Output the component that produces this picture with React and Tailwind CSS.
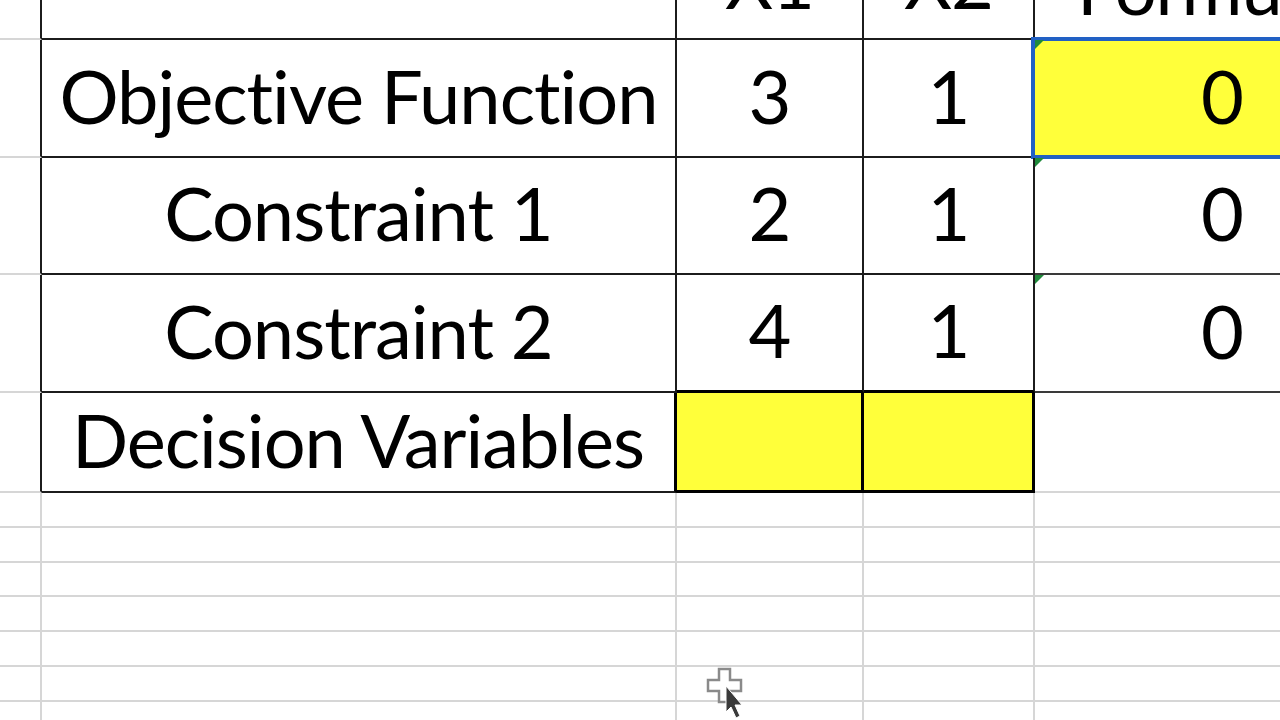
import React from "react";

const FONT = { fontFamily: "Lato, 'Open Sans', sans-serif", fontVariantLigatures: "none" };

function Tri() {
  return (
    <svg className="absolute left-0 top-0" width="9" height="9" viewBox="0 0 9 9">
      <polygon points="0,0 9,0 0,9" fill="#1f8a3b" />
    </svg>
  );
}

function Cell({ cls = "", children }) {
  return <div className={"relative flex " + cls}>{children}</div>;
}

export default function App() {
  const txt = "text-[74px] leading-none tracking-[-1px] text-black";
  const lightRows = [0, 1, 2, 3, 4, 5, 6];
  return (
    <div className="w-[1280px] h-[720px] overflow-hidden bg-white relative" style={FONT}>
      <div className="grid grid-cols-[42px_635px_187px_171px_1fr] grid-rows-[40px_118px_117px_118px_100px_35px_35px_34px_35px_35px_35px_35px]">
        {/* header row */}
        <Cell cls="border-r-2 border-b-2 border-r-[#1c1c1c] border-b-[#d6d6d6]" />
        <Cell cls="border-r-2 border-b-2 border-[#1c1c1c]" />
        <Cell cls="border-r-2 border-b-2 border-[#1c1c1c] overflow-hidden items-end justify-center pb-[20px]">
          <span className={txt}>X1</span>
        </Cell>
        <Cell cls="border-r-2 border-b-2 border-[#1c1c1c] overflow-hidden items-end justify-center pb-[20px]">
          <span className={txt}>X2</span>
        </Cell>
        <Cell cls="border-b-2 border-[#1c1c1c] overflow-hidden items-end pl-[42px] pb-[14px]">
          <span className={txt + " whitespace-nowrap"}>Formula</span>
        </Cell>

        {/* row 1 */}
        <Cell cls="border-r-2 border-b-2 border-r-[#1c1c1c] border-b-[#d6d6d6]" />
        <Cell cls="border-r-2 border-b-2 border-[#1c1c1c] items-center justify-center pb-[5px]">
          <span className={txt + " whitespace-nowrap"}>Objective Function</span>
        </Cell>
        <Cell cls="border-r-2 border-b-2 border-[#1c1c1c] items-center justify-center pb-[5px]">
          <span className={txt}>3</span>
        </Cell>
        <Cell cls="border-r-2 border-b-2 border-[#1c1c1c] items-center justify-center pb-[5px]">
          <span className={txt}>1</span>
        </Cell>
        <Cell cls="border-b-2 border-[#1c1c1c] bg-[#ffff3a] items-center justify-end pr-[37px] pb-[5px]">
          <div className="absolute left-[-4px] top-[-3px] right-[-10px] bottom-[-3px] border-4 border-[#2160c4]" />
          <Tri />
          <span className={txt + " relative"}>0</span>
        </Cell>

        {/* row 2 */}
        <Cell cls="border-r-2 border-b-2 border-r-[#1c1c1c] border-b-[#d6d6d6]" />
        <Cell cls="border-r-2 border-b-2 border-[#1c1c1c] items-center justify-center pb-[5px]">
          <span className={txt + " whitespace-nowrap"}>Constraint 1</span>
        </Cell>
        <Cell cls="border-r-2 border-b-2 border-[#1c1c1c] items-center justify-center pb-[5px]">
          <span className={txt}>2</span>
        </Cell>
        <Cell cls="border-r-2 border-b-2 border-[#1c1c1c] items-center justify-center pb-[5px]">
          <span className={txt}>1</span>
        </Cell>
        <Cell cls="border-b-2 border-[#3a3a3a] items-center justify-end pr-[37px] pb-[5px]">
          <Tri />
          <span className={txt}>0</span>
        </Cell>

        {/* row 3 */}
        <Cell cls="border-r-2 border-b-2 border-r-[#1c1c1c] border-b-[#d6d6d6]" />
        <Cell cls="border-r-2 border-b-2 border-[#1c1c1c] items-center justify-center pb-[5px]">
          <span className={txt + " whitespace-nowrap"}>Constraint 2</span>
        </Cell>
        <Cell cls="border-r-2 border-b-[3px] border-r-[#1c1c1c] border-b-black items-center justify-center pb-[5px]">
          <span className={txt}>4</span>
        </Cell>
        <Cell cls="border-r-2 border-b-[3px] border-r-[#1c1c1c] border-b-black items-center justify-center pb-[5px]">
          <span className={txt}>1</span>
        </Cell>
        <Cell cls="border-b-2 border-[#3a3a3a] items-center justify-end pr-[37px] pb-[5px]">
          <Tri />
          <span className={txt}>0</span>
        </Cell>

        {/* row 4 */}
        <Cell cls="border-r-2 border-b-2 border-r-[#1c1c1c] border-b-[#d6d6d6]" />
        <Cell cls="border-r-[3px] border-b-2 border-r-black border-b-[#1c1c1c] items-center justify-center pb-[5px]">
          <span className={txt + " whitespace-nowrap"}>Decision Variables</span>
        </Cell>
        <Cell cls="border-r-[3px] border-b-[3px] border-black bg-[#ffff3a]" />
        <Cell cls="border-r-[3px] border-b-[3px] border-black bg-[#ffff3a]" />
        <Cell cls="border-b-2 border-[#d6d6d6]" />

        {/* empty grid rows */}
        {lightRows.map((i) => (
          <React.Fragment key={i}>
            <Cell cls="border-r-2 border-b-2 border-[#d6d6d6]" />
            <Cell cls="border-r-2 border-b-2 border-[#d6d6d6]" />
            <Cell cls="border-r-2 border-b-2 border-[#d6d6d6]" />
            <Cell cls="border-r-2 border-b-2 border-[#d6d6d6]" />
            <Cell cls="border-b-2 border-[#d6d6d6]" />
          </React.Fragment>
        ))}
      </div>

      {/* mouse cursor */}
      <svg className="absolute left-[704px] top-[666px]" width="48" height="54" viewBox="0 0 48 54">
        <path d="M15 3 H26 V14 H37 V25 H26 V36 H15 V25 H4 V14 H15 Z" fill="#ffffff" stroke="#8a8a8a" strokeWidth="2.5" />
        <path d="M22 20 L22 46 L27 41 L32 52 L36 50 L31 39 L38 39 Z" fill="#3a3a3a" stroke="#ffffff" strokeWidth="1" />
      </svg>
    </div>
  );
}
